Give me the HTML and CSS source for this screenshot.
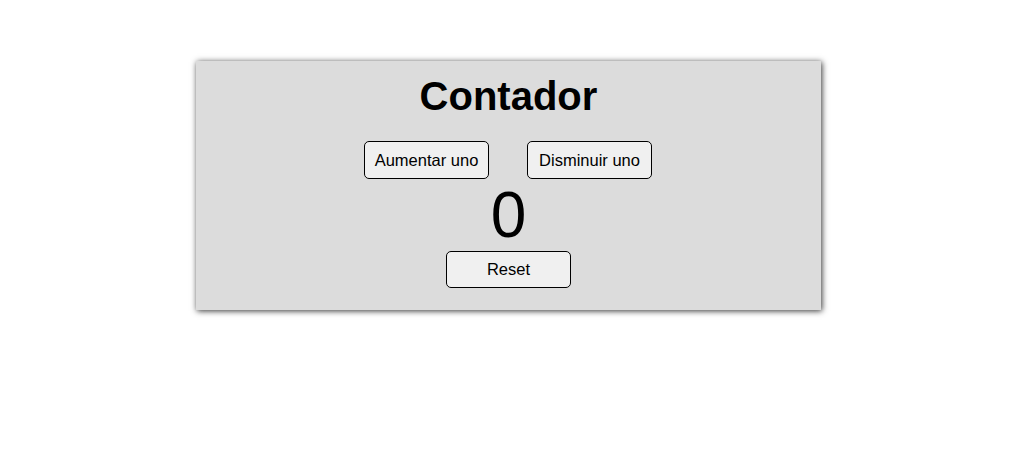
FILE: index.html
```html
<!DOCTYPE html>
<html lang="es">
<head>
<meta charset="utf-8">
<title>Contador</title>
<link rel="stylesheet" href="styles.css">
</head>
<body>
<main class="card">
  <h1 class="title">Contador</h1>
  <div class="controls">
    <button class="btn btn-row" type="button">Aumentar uno</button>
    <button class="btn btn-row" type="button">Disminuir uno</button>
  </div>
  <div class="count">0</div>
  <button class="btn btn-reset" type="button">Reset</button>
</main>
</body>
</html>
```

FILE: styles.css
```css
html, body {
  margin: 0;
  padding: 0;
  background: #ffffff;
  font-family: "Liberation Sans", Arial, sans-serif;
}

body {
  box-sizing: border-box;
  min-height: 100vh;
  padding: 61px 0 40px 196px;
}

.card {
  box-sizing: border-box;
  width: 625px;
  height: 249px;
  background: #dcdcdc;
  box-shadow: 1px 1px 6px rgba(0, 0, 0, 0.8);
  display: flex;
  flex-direction: column;
  align-items: center;
  padding-top: 12px;
}

.title {
  margin: 0;
  font-size: 40px;
  font-weight: bold;
  line-height: 46px;
  color: #000;
}

.controls {
  display: flex;
  gap: 38px;
  margin-top: 22px;
  margin-right: 1px;
}

.btn {
  box-sizing: border-box;
  width: 125px;
  font-family: "Liberation Sans", Arial, sans-serif;
  font-size: 16.5px;
  color: #000;
  background: #f0f0f0;
  border: 1px solid #000;
  border-radius: 5px;
  padding: 0;
}

.btn-row {
  height: 38px;
}

.count {
  font-size: 64px;
  line-height: 72px;
  color: #000;
}

.btn-reset {
  height: 37px;
}
```
